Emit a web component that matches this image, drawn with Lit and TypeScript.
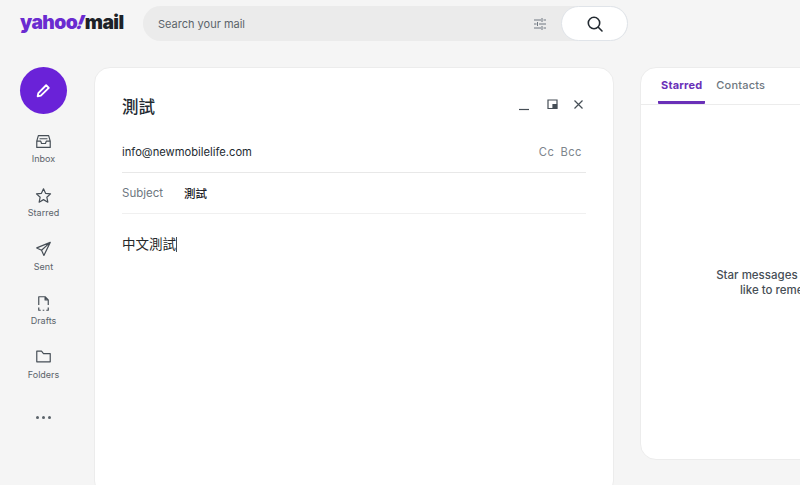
import { LitElement, html, css, svg } from "lit";
import { customElement } from "lit/decorators.js";

const navIcons: Record<string, unknown> = {
  Inbox: svg`<path d="M5.500 4.500h13l2 7v8h-17v-8z M3.500 11.500h5l1 3h5l1-3h5 M7 8.500h10"/>`,
  Starred: svg`<path d="M12 3.500l2.600 5.800 6.300.7-4.700 4.200 1.300 6.200-5.500-3.200-5.500 3.200 1.300-6.200L3.100 10l6.300-.7z"/>`,
  Sent: svg`<path d="M20.500 3L3.500 10l6 3 3 6.500z M9.500 13L20.500 3"/>`,
  Drafts: svg`<path d="M6 14V3.500h8l4 4V14 M14 3.500v4h4 M6 17v3.500h2.500 M11 20.500h2 M15.500 20.500H18V17"/>`,
  Folders: svg`<path d="M3.500 4h6l2.500 3h8.500v10.500h-17z"/>`,
};

const navItems = ["Inbox", "Starred", "Sent", "Drafts", "Folders"];

@customElement("app-root")
export class AppRoot extends LitElement {
  static styles = css`
    :host {
      display: block;
      width: 800px;
      height: 485px;
      overflow: hidden;
      background: #f5f5f5;
      font-family: Inter, "Noto Sans CJK TC", sans-serif;
      color: #232a31;
    }
    .header {
      display: flex;
      align-items: center;
      height: 47px;
      padding-left: 20px;
      box-sizing: border-box;
    }
    .logo {
      width: 123px;
      height: 28px;
      font-family: Inter, sans-serif;
      font-size: 19.300px;
      font-weight: 900;
      letter-spacing: -0.6px;
      white-space: nowrap;
      color: #6a2bd0;
      line-height: 24px;
    }
    .logo b {
      font-weight: 900;
      color: #1d2228;
      margin-left: 1px;
    }
    .logo i {
      font-weight: 900;
      font-style: italic;
      display: inline-block;
      transform: skewX(-12deg);
    }
    .search {
      display: flex;
      align-items: center;
      width: 485px;
      height: 35px;
      background: #ebebeb;
      border-radius: 18px;
      padding-left: 15px;
      box-sizing: border-box;
    }
    .search-text {
      flex: 1;
      font-size: 11px;
      color: #5b636a;
    }
    .filter {
      width: 14px;
      height: 14px;
      margin-right: 14px;
      fill: none;
      stroke: #6e7780;
      stroke-width: 1;
    }
    .search-btn {
      display: flex;
      align-items: center;
      justify-content: center;
      width: 67px;
      height: 35px;
      background: #fff;
      border: 1px solid #e0e4e9;
      border-radius: 18px;
      box-sizing: border-box;
    }
    .search-btn svg {
      width: 18px;
      height: 18px;
      fill: none;
      stroke: #232a31;
      stroke-width: 1.600;
      stroke-linecap: round;
    }
    .body {
      display: flex;
      align-items: flex-start;
      padding-top: 20px;
    }
    .side {
      display: flex;
      flex-direction: column;
      align-items: center;
      width: 94px;
      padding-right: 7px;
      box-sizing: border-box;
      flex-shrink: 0;
    }
    .compose {
      display: flex;
      align-items: center;
      justify-content: center;
      width: 47px;
      height: 47px;
      border-radius: 50%;
      background: #6a22d8;
      margin-bottom: 18px;
    }
    .compose svg {
      width: 19px;
      height: 19px;
      fill: none;
      stroke: #fff;
      stroke-width: 1.800;
      stroke-linejoin: round;
    }
    .nav {
      display: flex;
      flex-direction: column;
      align-items: center;
      height: 54px;
      font-size: 9px;
      line-height: 11px;
      color: #5b636a;
    }
    .nav svg {
      width: 19px;
      height: 19px;
      margin-bottom: 2px;
      fill: none;
      stroke: #464e56;
      stroke-width: 1.500;
      stroke-linejoin: round;
    }
    .dots {
      display: flex;
      gap: 3px;
      margin-top: 14px;
    }
    .dots span {
      width: 3px;
      height: 3px;
      border-radius: 50%;
      background: #5b636a;
    }
    .card {
      background: #fff;
      border: 1px solid #ececec;
      border-radius: 16px;
      box-sizing: border-box;
      flex-shrink: 0;
    }
    .mail {
      width: 520px;
      height: 430px;
      padding: 0 27px;
      margin-right: 26px;
    }
    .title-row {
      display: flex;
      align-items: center;
      justify-content: space-between;
      height: 60px;
      padding-top: 18px;
      box-sizing: border-box;
    }
    .title {
      font-size: 16.500px;
      line-height: 42px;
      font-weight: 500;
      color: #232a31;
    }
    .win {
      display: flex;
      align-items: center;
      gap: 14px;
      margin-right: 1px;
      margin-bottom: 4px;
    }
    .win svg {
      width: 13px;
      height: 13px;
      fill: none;
      stroke: #464e56;
      stroke-width: 1.200;
    }
    .to {
      display: flex;
      align-items: center;
      justify-content: space-between;
      height: 43px;
      margin-top: 2px;
      padding-top: 2px;
      box-sizing: border-box;
      border-bottom: 1px solid #e8e8e8;
      font-size: 11.200px;
      color: #232a31;
    }
    .cc {
      display: flex;
      gap: 6px;
      color: #7d858c;
      letter-spacing: 0.5px;
      padding-right: 4px;
    }
    .subject {
      display: flex;
      align-items: center;
      height: 40px;
      border-bottom: 1px solid #f0f0f0;
      font-size: 11.500px;
    }
    .subject span:first-child {
      width: 62px;
      color: #6e7780;
    }
    .subject span:last-child {
      font-size: 11.500px;
      font-weight: 500;
      color: #1d2228;
    }
    .text {
      display: flex;
      align-items: center;
      margin-top: 20px;
      font-size: 13.500px;
      line-height: 20px;
      color: #26282a;
    }
    .caret {
      width: 1px;
      height: 15px;
      background: #464e56;
    }
    .panel {
      width: 292px;
      height: 393px;
    }
    .tabs {
      display: flex;
      height: 36px;
      border-bottom: 1px solid #ececec;
      padding-left: 17px;
      font-size: 11px;
      font-weight: 500;
      color: #6e7780;
    }
    .tab {
      height: 36px;
      padding: 10px 3px 0;
      box-sizing: border-box;
      margin-right: 8px;
      letter-spacing: 0.2px;
    }
    .tab.on {
      color: #6a30b8;
      font-weight: 700;
      border-bottom: 3px solid #6a30b8;
      border-radius: 0 0 1px 1px;
    }
    .empty {
      margin-top: 163px;
      text-align: center;
      font-size: 11.500px;
      line-height: 15px;
      font-weight: 500;
      color: #464e56;
    }
  `;

  render() {
    return html`
      <div class="header">
        <div class="logo">yahoo<i>!</i><b>mail</b></div>
        <div class="search">
          <span class="search-text">Search your mail</span>
          <svg class="filter" viewBox="0 0 14 14">
            <path d="M1 3h7M10.500 3H13M9 1v4M1 7h2.500M6 7h7M4.500 5v4M1 11h7M10.500 11H13M9 9v4"/>
          </svg>
          <div class="search-btn">
            <svg viewBox="0 0 18 18"><circle cx="8" cy="8" r="5.700"/><path d="M12.300 12.300L16 16"/></svg>
          </div>
        </div>
      </div>
      <div class="body">
        <div class="side">
          <div class="compose">
            <svg viewBox="0 0 18 18"><path d="M3.500 14.500l.6-3L11.500 4l2.500 2.500-7.500 7.400z"/></svg>
          </div>
          ${navItems.map(
            (n) => html`<div class="nav">
              <svg viewBox="0 0 24 24">${navIcons[n]}</svg>
              <span>${n}</span>
            </div>`
          )}
          <div class="dots"><span></span><span></span><span></span></div>
        </div>
        <div class="card mail">
          <div class="title-row">
            <div class="title">測試</div>
            <div class="win">
              <svg viewBox="0 0 13 13"><path d="M1 10.500h10"/></svg>
              <svg viewBox="0 0 13 13"><path d="M3 1h9v8.500H3z"/><path d="M8 5.500h3.500v3.500H8z" fill="#464e56"/></svg>
              <svg viewBox="0 0 13 13"><path d="M2.500 1.500l8 8M10.500 1.500l-8 8"/></svg>
            </div>
          </div>
          <div class="to">
            <span>info@newmobilelife.com</span>
            <span class="cc"><span>Cc</span><span>Bcc</span></span>
          </div>
          <div class="subject"><span>Subject</span><span>測試</span></div>
          <div class="text">中文測試<span class="caret"></span></div>
        </div>
        <div class="card panel">
          <div class="tabs">
            <div class="tab on">Starred</div>
            <div class="tab">Contacts</div>
          </div>
          <div class="empty">Star messages that you'd<br />like to remember</div>
        </div>
      </div>
    `;
  }
}
